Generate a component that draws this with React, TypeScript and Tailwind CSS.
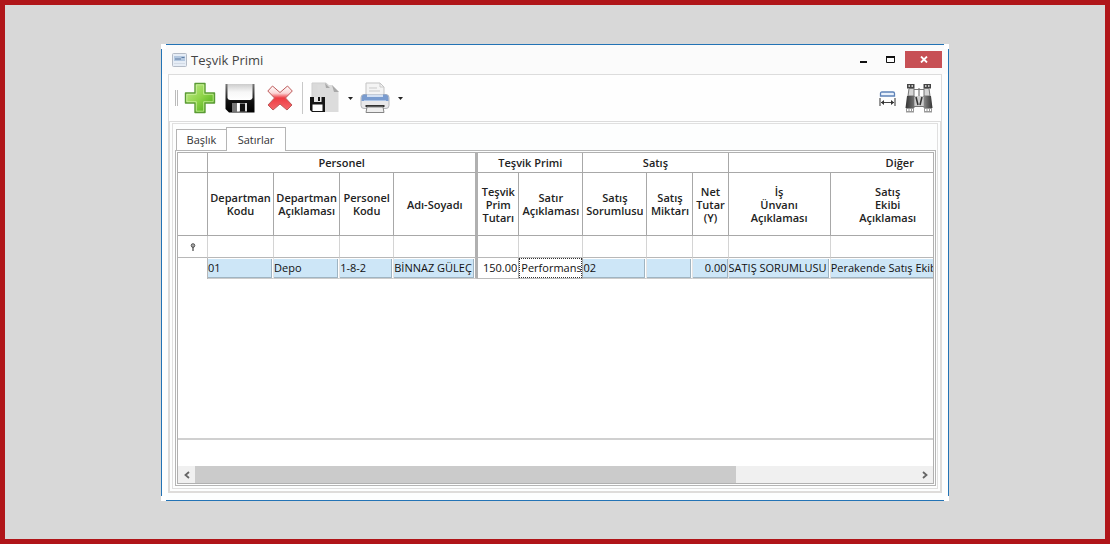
import type { ReactNode } from 'react'
import { clsx } from 'clsx'

interface Column {
  title: string[]
  width: string
  value: string
  align?: 'right'
  editable?: boolean
  frozenEdge?: boolean
}

const groups = [
  { title: 'Personel', span: 4, frozenEdge: true },
  { title: 'Teşvik Primi', span: 2 },
  { title: 'Satış', span: 3 },
  { title: 'Diğer', span: 3 },
]

const columns: Column[] = [
  { title: ['Departman', 'Kodu'], width: 'w-[66px]', value: '01' },
  { title: ['Departman', 'Açıklaması'], width: 'w-[66px]', value: 'Depo' },
  { title: ['Personel', 'Kodu'], width: 'w-[54px]', value: '1-8-2' },
  { title: ['Adı-Soyadı'], width: 'w-[84px]', value: 'BİNNAZ GÜLEÇ', frozenEdge: true },
  { title: ['Teşvik', 'Prim', 'Tutarı'], width: 'w-[41px]', value: '150.00', align: 'right', editable: true },
  { title: ['Satır', 'Açıklaması'], width: 'w-[64px]', value: 'Performans', editable: true },
  { title: ['Satış', 'Sorumlusu'], width: 'w-[64px]', value: '02' },
  { title: ['Satış', 'Miktarı'], width: 'w-[46px]', value: '' },
  { title: ['Net', 'Tutar', '(Y)'], width: 'w-[35px]', value: '0.00', align: 'right' },
  { title: ['İş', 'Ünvanı', 'Açıklaması'], width: 'w-[102px]', value: 'SATIŞ SORUMLUSU' },
  { title: ['Satış', 'Ekibi', 'Açıklaması'], width: 'w-[115px]', value: 'Perakende Satış Ekibi' },
  { title: [], width: 'w-[126px]', value: '' },
]

function AddIcon() {
  return (
    <svg width="32" height="32" viewBox="0 0 32 32" aria-hidden="true">
      <defs>
        <linearGradient id="add" x1="0" y1="0" x2="1" y2="1">
          <stop offset="0" stopColor="#c6ee92" />
          <stop offset="0.5" stopColor="#8fd449" />
          <stop offset="1" stopColor="#3da30c" />
        </linearGradient>
      </defs>
      <path d="M11 1.500h10V11h9.500v10H21v9.500H11V21H1.500V11H11z" fill="url(#add)" stroke="#5a9a35" strokeWidth="1.400" strokeLinejoin="round" />
      <path d="M12.300 2.800h7.400v9.500h9.500v7.400h-9.500v9.500h-7.400v-9.500H2.800v-7.400h9.500z" fill="none" stroke="#d5f5ac" strokeWidth="0.700" />
    </svg>
  )
}

function SaveIcon() {
  return (
    <svg width="30" height="30" viewBox="0 0 30 30" aria-hidden="true">
      <defs>
        <linearGradient id="label" x1="0" y1="0" x2="0" y2="1">
          <stop offset="0" stopColor="#ccc" />
          <stop offset="0.5" stopColor="#f7f7f7" />
          <stop offset="1" stopColor="#fff" />
        </linearGradient>
        <linearGradient id="body" x1="0" y1="0" x2="0" y2="1">
          <stop offset="0" stopColor="#777" />
          <stop offset="0.6" stopColor="#111" />
          <stop offset="1" stopColor="#000" />
        </linearGradient>
      </defs>
      <path d="M1 1h28.500v28.500H4L.5 26V1z" fill="url(#body)" />
      <path d="M2.500 1h25v14q-1 2-2.500 2H5q-2 0-2.500-2z" fill="url(#label)" />
      <path d="M7 20h15v8.500H7z" fill="#ddd" />
      <path d="M7 20h5v8.500H7z" fill="#777" />
      <path d="M15 20.500h5v8h-5z" fill="#111" />
      <path d="M12 20h2.500v8.500H12z" fill="#fff" />
    </svg>
  )
}

function DeleteIcon() {
  return (
    <svg width="26" height="26" viewBox="0 0 26 26" aria-hidden="true">
      <defs>
        <linearGradient id="del" x1="0" y1="0" x2="0" y2="1">
          <stop offset="0" stopColor="#fff" />
          <stop offset="0.300" stopColor="#fbd5d5" />
          <stop offset="0.500" stopColor="#ee3b42" />
          <stop offset="1" stopColor="#f4696c" />
        </linearGradient>
      </defs>
      <path d="M5.500 1 13 7.500 20.500 1 25.300 6 18.500 13l6.500 7-5 5-7-6-7 6-5-5 6.500-7L.8 6z" fill="url(#del)" stroke="#bd5a5a" strokeWidth="1" strokeLinejoin="round" />
    </svg>
  )
}

function SaveAsIcon() {
  return (
    <svg width="30" height="32" viewBox="0 0 30 32" aria-hidden="true">
      <path d="M2 1h14l5 4.500V29H2z" fill="#dadada" stroke="#cfcfcf" />
      <path d="M7.500 3H22l6.500 6.500V30h-21z" fill="#dcdcdc" />
      <path d="m15 1 5 5h-4zM22 3l7 7h-5z" fill="#a9a9a9" />
      <path d="M0 15h15v15H2l-2-2z" fill="#161616" />
      <path d="M4 15h7.500v5H4z" fill="#e4e4e4" />
      <path d="M8 15h2v4H8z" fill="#161616" />
      <path d="M2.500 22.500h10V29h-10z" fill="#fff" />
    </svg>
  )
}

function PrintIcon() {
  return (
    <svg width="30" height="32" viewBox="0 0 30 32" aria-hidden="true">
      <path d="M6 1h14l4 4v10H6z" fill="#f4f4f4" stroke="#c3c3c3" />
      <path d="M20 1v4h4M9 6h8M9 9h11" fill="none" stroke="#c9c9c9" />
      <rect x="1" y="12.500" width="28" height="14" rx="3" fill="#e8e8ea" stroke="#b4b6ba" />
      <path d="M1.500 16q0-3.500 3-3.500H7v2h16v-2h2.500q3 0 3 3.500v3h-27z" fill="#7a9ccf" />
      <path d="M7 12.500h16v2.500H7z" fill="#d4e1f3" />
      <path d="M4 18.500h22" stroke="#adc6e8" />
      <path d="M5.500 24h19" stroke="#333" strokeWidth="2" />
      <path d="M7 25h16l1 5.500H6z" fill="#eee" stroke="#858585" />
    </svg>
  )
}

function FitWidthIcon() {
  return (
    <svg width="17" height="15" viewBox="0 0 17 15" aria-hidden="true">
      <path d="M1.500 5V2.500q0-1.500 1.500-1.500h11q1.500 0 1.500 1.500V5z" fill="#e8f1fc" stroke="#5d82b8" strokeWidth="1.300" />
      <path d="M1 7v8M16 7v8M2 11.500h13" stroke="#444" strokeWidth="1.100" />
      <path d="m2 11.500 3-2.500v5zM15 11.500 12 9v5z" fill="#333" />
    </svg>
  )
}

function BinocularsIcon() {
  return (
    <svg width="28" height="30" viewBox="0 0 28 30" aria-hidden="true">
      <defs>
        <linearGradient id="barrel" x1="0" x2="1">
          <stop offset="0" stopColor="#333" />
          <stop offset="0.350" stopColor="#777" />
          <stop offset="0.550" stopColor="#aaa" />
          <stop offset="1" stopColor="#333" />
        </linearGradient>
      </defs>
      {/* Bridge between the barrels */}
      <path d="M9 6.500h10M9 13.500h10M9 23.500h10M14 5v9" fill="none" stroke="#777" strokeWidth="1.200" />
      <path d="M9.500 13h9v10h-9z" fill="#ccc" />
      <path d="m11 14 2 8M17 14l-2 8" stroke="#333" strokeWidth="1.500" />
      {/* Eyepieces */}
      <path d="M2 1h7.500v4.500H2zM18.500 1H26v4.500h-7.500z" fill="#444" />
      <path d="M3.500 3h1.500M6.500 3H8M20 3h1.500M23 3h1.500" stroke="#eee" strokeWidth="1.500" />
      <path d="M4 5.500h5V13H3zM19 5.500h5l1 7.500h-6z" fill="#d5d5d5" stroke="#777" />
      {/* Barrels */}
      <path d="M2 13h7.500v12H.5zM18.500 13H26l1.500 12h-9z" fill="url(#barrel)" />
      <path d="M1 25h8v4.500H1zM19 25h8v4.500h-8z" fill="#999" />
      <path d="M2 27h6M20 27h6" stroke="#fff" strokeWidth="2" strokeDasharray="1.500 1" />
    </svg>
  )
}

function Caret() {
  return (
    <svg width="5" height="3" viewBox="0 0 5 3" aria-hidden="true">
      <path d="M0 0h5L2.500 3z" fill="#222" />
    </svg>
  )
}

function ToolButton({ label, className, children }: { label: string; className?: string; children: ReactNode }) {
  return (
    <button type="button" aria-label={label} className={clsx('flex shrink-0 items-center justify-center', className)}>
      {children}
    </button>
  )
}

function TitleBar() {
  return (
    <header className="flex h-[29px] shrink-0 items-center bg-[#fbfbfb] pl-2.5 pr-1.5">
      <svg width="15" height="14" viewBox="0 0 15 14" aria-hidden="true">
        <rect x="0.500" y="0.500" width="14" height="13" rx="1" fill="#e6edf6" stroke="#b4bbc6" />
        <path d="M2 3h11v5H2z" fill="#b4c8e0" />
        <path d="M3 6h6M9.500 4.500h3" stroke="#5f7ca3" />
        <path d="M2 10.500h11" stroke="#d3dbe6" />
      </svg>
      <h1 className="ml-1 flex-1 text-[13px] leading-4 text-[#444]">Teşvik Primi</h1>
      <div className="flex items-center gap-1">
        <button type="button" aria-label="Simge durumuna küçült" className="flex h-[17px] w-[23px] items-center justify-center">
          <svg width="7" height="8" viewBox="0 0 7 8" aria-hidden="true">
            <path d="M0 5h7v2H0z" fill="#111" />
          </svg>
        </button>
        <button type="button" aria-label="Ekranı kapla" className="flex h-[17px] w-[22px] items-center justify-center">
          <svg width="9" height="7" viewBox="0 0 9 7" aria-hidden="true">
            <path d="M.5 1h8v5.500h-8z" fill="none" stroke="#111" />
            <path d="M0 0h9v2H0z" fill="#111" />
          </svg>
        </button>
        <button type="button" aria-label="Kapat" className="flex h-[17px] w-[37px] items-center justify-center bg-[#c75055]">
          <svg width="8" height="7" viewBox="0 0 8 7" aria-hidden="true">
            <path d="m1 .5 6 6M7 .5l-6 6" stroke="#fff" strokeWidth="1.800" />
          </svg>
        </button>
      </div>
    </header>
  )
}

function Toolbar() {
  return (
    <div role="toolbar" className="mx-1.5 flex h-12 shrink-0 items-center border border-[#dcdcdc] bg-[#fefefe] pl-1.5 pr-1">
      <span className="h-4 w-[3px] border-x border-[#bbb]" />
      <ToolButton label="Ekle" className="ml-1.5 w-8"><AddIcon /></ToolButton>
      <ToolButton label="Kaydet" className="ml-2 w-8"><SaveIcon /></ToolButton>
      <ToolButton label="Sil" className="ml-2 w-8"><DeleteIcon /></ToolButton>
      <span className="ml-1.5 h-8 w-px bg-[#c8c8c8]" />
      <ToolButton label="Farklı kaydet" className="ml-1.5 w-8"><SaveAsIcon /></ToolButton>
      <ToolButton label="Kaydetme seçenekleri" className="ml-1 h-8 w-2.5"><Caret /></ToolButton>
      <ToolButton label="Yazdır" className="ml-1 w-8"><PrintIcon /></ToolButton>
      <ToolButton label="Yazdırma seçenekleri" className="ml-1 h-8 w-2.5"><Caret /></ToolButton>
      <div className="flex-1" />
      <ToolButton label="Sütunları sığdır" className="w-5"><FitWidthIcon /></ToolButton>
      <ToolButton label="Bul" className="ml-1.5 mr-0.5 w-8"><BinocularsIcon /></ToolButton>
    </div>
  )
}

function edge(frozen?: boolean) {
  return frozen ? 'border-r-[3px] border-r-[#b0b0b0]' : 'border-r border-r-[#a8a8a8]'
}

function DataCell({ column }: { column: Column }) {
  const { title, value, align, editable, frozenEdge } = column
  if (editable) {
    return (
      <td className={clsx('h-[21px] border-b border-b-[#bbb]', edge())}>
        <input
          aria-label={title.join(' ')}
          defaultValue={value}
          className={clsx(
            'block h-5 w-full bg-white pb-0.5 text-[11px] leading-4 outline-none',
            align === 'right' ? 'pr-px text-right' : 'border border-dotted border-[#333] pl-px',
          )}
        />
      </td>
    )
  }
  return (
    <td className={clsx('h-[21px] border-b border-b-[#ccc]', frozenEdge ? edge(true) : 'border-r border-r-[#e4e4e4]')}>
      <div
        className={clsx(
          'h-[19px] overflow-hidden border-b border-r border-[#9fb4c2] bg-[#cde6f7] leading-[18px] whitespace-nowrap',
          align === 'right' ? 'text-right' : 'mr-px',
        )}
      >
        {value}
      </div>
    </td>
  )
}

function LinesTable() {
  return (
    <table className="w-[894px] table-fixed border-separate border-spacing-0 text-[11px] text-[#111]">
      <colgroup>
        <col className="w-[30px]" />
        {columns.map((c, i) => <col key={i} className={c.width} />)}
      </colgroup>
      <thead className="text-[#222]">
        <tr>
          <th className="h-5 border-b border-r border-[#a8a8a8]" />
          {groups.map((g) => (
            <th key={g.title} colSpan={g.span} className={clsx('h-5 border-b border-b-[#a8a8a8] leading-4 font-semibold', edge(g.frozenEdge))}>
              {g.title}
            </th>
          ))}
        </tr>
        <tr>
          <th className="h-[63px] border-b border-r border-[#a8a8a8]" />
          {columns.map((c, i) => (
            <th key={i} className={clsx('h-[63px] border-b border-b-[#a8a8a8] leading-[13px] font-semibold whitespace-nowrap', edge(c.frozenEdge))}>
              {c.title.map((line) => <span key={line} className="-mx-2 block">{line}</span>)}
            </th>
          ))}
        </tr>
      </thead>
      <tbody>
        <tr>
          <td className="h-[22px] border-b border-r border-b-[#b8b8b8] border-r-[#d4d4d4]">
            <svg className="mx-auto" width="6" height="8" viewBox="0 0 6 8" aria-hidden="true">
              <circle cx="3" cy="2.500" r="1.800" fill="#aaa" stroke="#555" />
              <path d="M3 4v4" stroke="#444" strokeWidth="1.200" />
            </svg>
          </td>
          {columns.map((c, i) => (
            <td key={i} className={clsx('h-[22px] border-b border-b-[#b8b8b8]', c.frozenEdge ? edge(true) : 'border-r border-r-[#d4d4d4]')}>
              <input aria-label={`${c.title.join(' ')} filtresi`} className="block h-5 w-full px-0.5 outline-none" />
            </td>
          ))}
        </tr>
        <tr>
          <td className="h-[21px] border-r border-[#b8b8b8]" />
          {columns.map((c, i) => <DataCell key={i} column={c} />)}
        </tr>
      </tbody>
    </table>
  )
}

function ScrollBar() {
  return (
    <div className="flex h-[17px] shrink-0 bg-[#f0f0f0]">
      <button type="button" aria-label="Sola kaydır" className="flex w-[17px] items-center justify-center">
        <svg width="6" height="8" viewBox="0 0 6 8" aria-hidden="true">
          <path d="M5 1 1.500 4 5 7" fill="none" stroke="#666" strokeWidth="1.800" />
        </svg>
      </button>
      <div className="flex-1">
        <div className="h-full w-3/4 bg-[#cbcbcb]" />
      </div>
      <button type="button" aria-label="Sağa kaydır" className="flex w-[17px] items-center justify-center">
        <svg width="6" height="8" viewBox="0 0 6 8" aria-hidden="true">
          <path d="M1 1l3.500 3L1 7" fill="none" stroke="#666" strokeWidth="1.800" />
        </svg>
      </button>
    </div>
  )
}

export default function App() {
  return (
    <main className="flex min-h-screen flex-col border-[5px] border-[#b01519] bg-[#d8d8d8] px-[156px] pb-[38px] pt-[39px] font-['Open_Sans','Noto_Sans',sans-serif]">
      <div className="relative flex min-w-0 flex-1 flex-col border border-[#2373b5] bg-[#fdfefe] pb-[7px]">
        {/* Window corners */}
        <span className="absolute -left-px -top-px size-[5px] bg-white" />
        <span className="absolute -right-px -top-px size-[5px] bg-white" />
        <span className="absolute -bottom-px -left-px size-[5px] bg-white" />
        <span className="absolute -bottom-px -right-px size-[5px] bg-white" />

        <TitleBar />
        <Toolbar />

        <section className="mx-1.5 flex min-w-0 flex-1 flex-col border-x-2 border-b-2 border-[#dedcda] p-0.5 pt-px">
          <div className="flex min-w-0 flex-1 flex-col border border-[#e0e0e0] pb-0.5 pl-0.5 pr-px pt-[3px]">
            <div role="tablist" className="flex items-end pl-px text-[11px] leading-4 text-[#333]">
              <button type="button" role="tab" aria-selected="false" className="h-[21px] w-[51px] border border-b-0 border-[#b5b5b5] bg-white">
                Başlık
              </button>
              <button type="button" role="tab" aria-selected="true" className="relative z-10 -mb-px -ml-px h-6 w-[60px] border border-b-0 border-[#b5b5b5] bg-white">
                Satırlar
              </button>
            </div>
            <div className="flex min-w-0 flex-1 flex-col border border-[#b5b5b5] p-px">
              <div className="flex min-w-0 flex-1 flex-col border border-[#b0b0b0] bg-white">
                <div className="flex-1 overflow-hidden">
                  <LinesTable />
                </div>
                <div className="h-7 shrink-0 border-t-2 border-[#d0d0d0]" />
                <ScrollBar />
              </div>
            </div>
          </div>
        </section>
      </div>
    </main>
  )
}
